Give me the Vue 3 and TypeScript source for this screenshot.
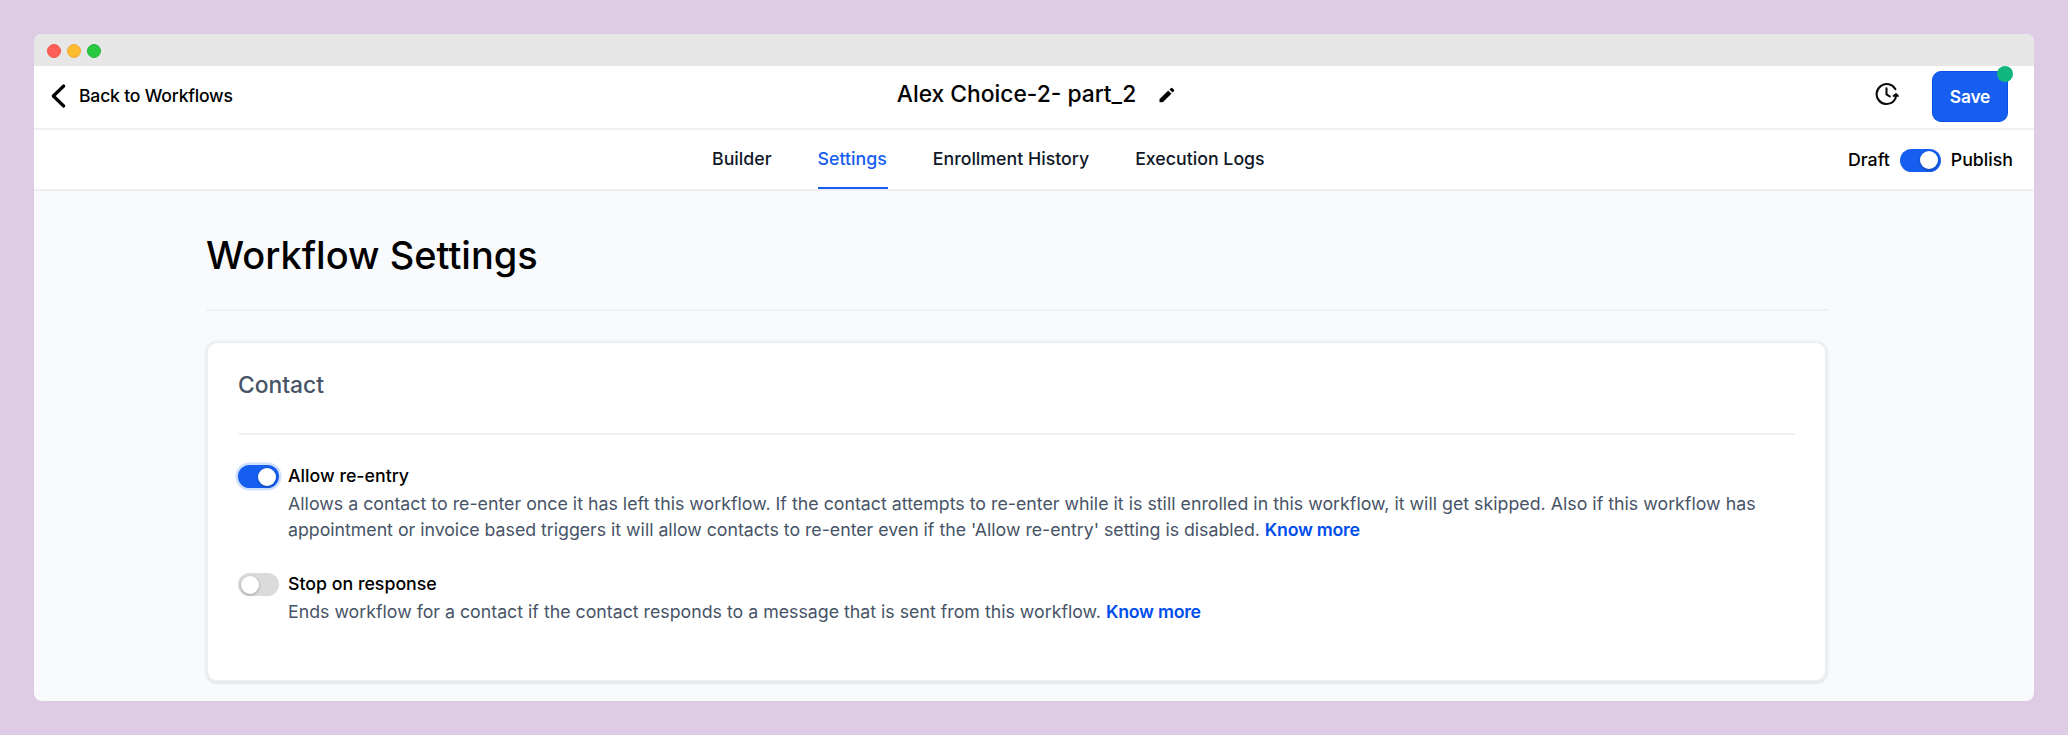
<script setup lang="ts">
import { ref } from 'vue'

interface Setting {
  title: string
  lines: string[]
  enabled: boolean
  focused: boolean
}

const tabs: string[] = ['Builder', 'Settings', 'Enrollment History', 'Execution Logs']
const activeTab = ref('Settings')
const published = ref(true)

const settings = ref<Setting[]>([
  {
    title: 'Allow re-entry',
    lines: [
      'Allows a contact to re-enter once it has left this workflow. If the contact attempts to re-enter while it is still enrolled in this workflow, it will get skipped. Also if this workflow has',
      "appointment or invoice based triggers it will allow contacts to re-enter even if the 'Allow re-entry' setting is disabled.",
    ],
    enabled: true,
    focused: true,
  },
  {
    title: 'Stop on response',
    lines: ['Ends workflow for a contact if the contact responds to a message that is sent from this workflow.'],
    enabled: false,
    focused: false,
  },
])
</script>

<template>
  <div class="desktop">
    <div class="window">
      <div class="titlebar">
        <span class="light red"></span>
        <span class="light amber"></span>
        <span class="light green"></span>
      </div>

      <header class="header">
        <a class="back">
          <svg class="chevron" viewBox="0 0 16 26" fill="none" stroke="#000" stroke-width="3.2" stroke-linecap="round" stroke-linejoin="round">
            <path d="M13.700 3 3.300 13l10.400 10" />
          </svg>
          <span>Back to Workflows</span>
        </a>
        <div class="name">
          <span class="name-text">Alex Choice-2- part_2</span>
          <svg class="pencil" viewBox="0 0 16 16" fill="#000">
            <path d="M0.700 15.100v-3.100L9.200 3.700l3.100 3.100-8.500 8.300z" stroke="#000" stroke-width="0.300" stroke-linejoin="round" />
            <path d="M10.500 2.500 11.800 1.200a1.200 1.200 0 0 1 1.700 0l1.300 1.300a1.200 1.200 0 0 1 0 1.700l-1.300 1.300z" />
          </svg>
        </div>
        <div class="actions">
          <svg class="history" viewBox="0 0 24 24" fill="none" stroke="#0b0b0d" stroke-width="2.1" stroke-linecap="round" stroke-linejoin="round">
            <path d="M20.300 7.100A10 10 0 1 0 18.400 19.400C20.200 17.800 21.100 15.500 21 13" />
            <path d="M11.500 6.400v6l3.200 2" />
            <path d="M18.300 14.100 21 11.700l2.300 2.400z" fill="#0b0b0d" stroke-width="1.400" />
          </svg>
          <button class="save">Save<i class="dot"></i></button>
        </div>
      </header>

      <nav class="tabbar">
        <div class="tabs">
          <a v-for="tab in tabs" :key="tab" class="tab" :class="{ active: tab === activeTab }" @click="activeTab = tab">{{ tab }}</a>
        </div>
        <div class="publish">
          <span>Draft</span>
          <span class="switch" :class="{ on: published }" @click="published = !published"><i class="knob"></i></span>
          <span>Publish</span>
        </div>
      </nav>

      <main class="content">
        <h1 class="heading">Workflow Settings</h1>
        <section class="card">
          <h2 class="card-title">Contact</h2>
          <div v-for="item in settings" :key="item.title" class="setting">
            <span class="switch" :class="{ on: item.enabled, focused: item.focused }" @click="item.enabled = !item.enabled"><i class="knob"></i></span>
            <div class="copy">
              <div class="label">{{ item.title }}</div>
              <p class="description">
                <template v-for="(line, i) in item.lines" :key="i"><br v-if="i > 0" /><span class="line">{{ line }}</span></template>
                {{ ' ' }}<a class="more">Know more</a>
              </p>
            </div>
          </div>
        </section>
      </main>
    </div>
  </div>
</template>

<style>
body {
  margin: 0;
  background: #decce4;
}
</style>

<style scoped>
.desktop {
  box-sizing: border-box;
  width: 2068px;
  height: 735px;
  padding: 34px;
  background: #decce4;
  font-family: Inter, "Liberation Sans", sans-serif;
  font-size: 17.75px;
  line-height: 25.4px;
  color: #000;
  overflow: hidden;
}
.window {
  height: 667px;
  border-radius: 8px;
  background: #f9fafc;
  overflow: hidden;
}
.titlebar {
  display: flex;
  align-items: center;
  gap: 6px;
  height: 32px;
  padding: 1px 13px 0;
  box-sizing: border-box;
  background: #e7e7e7;
}
.light {
  box-sizing: border-box;
  width: 14px;
  height: 14px;
  border-radius: 50%;
}
.red { background: #ff5f57; border: 1px solid #f0544c; }
.amber { background: #febc2e; border: 1px solid #eeaa3a; }
.green { background: #28c840; border: 1px solid #22b53a; }

.header {
  display: grid;
  grid-template-columns: 1fr auto 1fr;
  box-sizing: border-box;
  height: 64px;
  border-bottom: 2px solid #f0f1f4;
  background: #fff;
}
.back {
  display: flex;
  align-items: center;
  height: 59px;
  padding-left: 16px;
  font-size: 17.6px;
  letter-spacing: -0.2px;
  font-weight: 500;
}
.chevron {
  width: 16px;
  height: 26px;
  margin-right: 13px;
}
.name {
  display: flex;
  align-items: center;
  height: 55px;
  gap: 23px;
  padding-left: 4px;
  font-size: 22.8px;
  font-weight: 500;
}
.pencil {
  width: 16px;
  height: 16px;
  margin-top: 2px;
}
.actions {
  display: flex;
  justify-content: flex-end;
  align-items: flex-start;
  padding-right: 26px;
}
.history {
  width: 24px;
  height: 24px;
  margin: 16px 33px 0 0;
}
.save {
  position: relative;
  width: 76px;
  height: 51px;
  margin-top: 5px;
  padding: 0;
  border: 1px solid #0b51e8;
  border-radius: 9px;
  background: #155eef;
  color: #fff;
  font: 600 17.4px/49px Inter, "Liberation Sans", sans-serif;
  letter-spacing: -0.2px;
}
.dot {
  position: absolute;
  top: -6px;
  right: -6px;
  width: 16px;
  height: 16px;
  border-radius: 50%;
  background: #12b780;
}

.tabbar {
  display: flex;
  justify-content: space-between;
  box-sizing: border-box;
  height: 61px;
  border-bottom: 2px solid #eeeff3;
  background: #fff;
}
.tabs {
  display: flex;
  gap: 45px;
  padding-left: 678px;
}
.tab {
  height: 57px;
  padding-right: 1px;
  border-bottom: 2px solid transparent;
  line-height: 58px;
  font-weight: 500;
  color: #101828;
}
.tab.active {
  border-color: #155eef;
  color: #155eef;
}
.publish {
  display: flex;
  align-items: center;
  height: 60px;
  gap: 10px;
  padding-right: 21px;
  font-weight: 500;
}

.switch {
  flex: none;
  display: flex;
  align-items: center;
  box-sizing: border-box;
  width: 41px;
  height: 23px;
  padding: 0 3px;
  border-radius: 12px;
  background: #dbdbdb;
}
.switch.on {
  justify-content: flex-end;
  background: #155eef;
}
.switch.focused {
  box-shadow: 0 0 0 2.500px #cfdffc;
}
.knob {
  width: 18px;
  height: 18px;
  border-radius: 50%;
  background: #fff;
  box-shadow: 0 1px 3px rgba(0, 0, 0, 0.3);
}

.content {
  width: 1621px;
  margin-left: 172px;
}
.heading {
  height: 118px;
  margin: 0 0 30px;
  border-bottom: 2px solid #eff0f3;
  line-height: 128px;
  font-size: 38px;
  font-weight: 500;
}
.card {
  box-sizing: border-box;
  height: 341px;
  padding: 0 30px;
  border: 2px solid #eeeff3;
  border-radius: 11px;
  background: #fff;
  box-shadow: 0 1px 3px rgba(16, 24, 40, 0.14);
}
.card-title {
  height: 90px;
  margin: 0 0 28px;
  border-bottom: 2px solid #f1f2f5;
  line-height: 83px;
  font-size: 22.8px;
  font-weight: 500;
  color: #475467;
}
.setting {
  display: flex;
  align-items: flex-start;
  gap: 9px;
  margin-bottom: 28.8px;
}
.setting .switch {
  margin-top: 2px;
}
.label {
  font-weight: 500;
}
.description {
  margin: 3px 0 0;
  white-space: nowrap;
  color: #475467;
}
.line:not(:last-of-type) {
  letter-spacing: 0.014px;
}
br + .line {
  letter-spacing: -0.02px;
}
.more {
  font-weight: 600;
  letter-spacing: -0.25px;
  color: #004eeb;
}
</style>
